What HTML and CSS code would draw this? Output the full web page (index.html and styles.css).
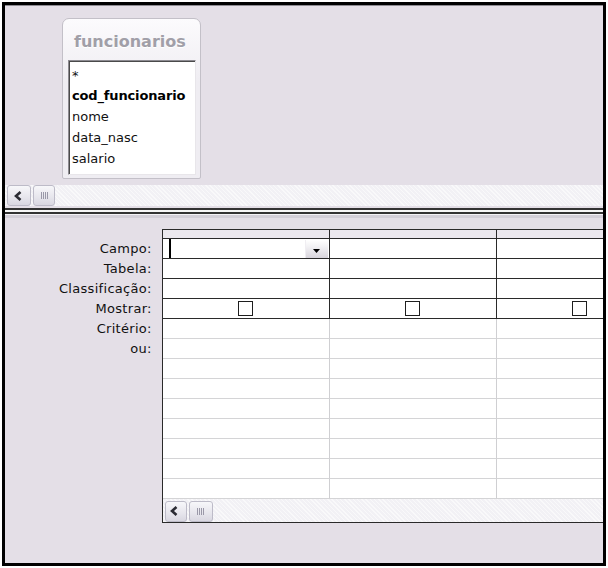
FILE: index.html
```html
<!DOCTYPE html>
<html lang="pt">
<head>
	<meta charset="UTF-8">
	<title>Consulta - funcionarios</title>
	<link rel="stylesheet" href="styles.css">
</head>
<body>
	<div class="frame">
		<!-- painel de tabelas -->
		<div class="design-pane">
			<div class="field-list">
				<div class="field-list-title">funcionarios</div>
				<ul class="fields">
					<li class="all">*</li>
					<li class="key">cod_funcionario</li>
					<li>nome</li>
					<li>data_nasc</li>
					<li>salario</li>
				</ul>
			</div>
		</div>
		<div class="hscroll top-scroll">
			<span class="sb-btn"><svg width="8" height="10" viewBox="0 0 8 10"><polyline points="6.5,1 2,5 6.5,9" fill="none" stroke="#2b2b33" stroke-width="2.6"/></svg></span>
			<span class="sb-thumb"><i></i><i></i><i></i><i></i></span>
		</div>
		<div class="splitter"></div>

		<!-- grade QBE -->
		<div class="qbe-pane">
			<div class="qbe-labels">
				<div class="lbl-head"></div>
				<div>Campo:</div>
				<div>Tabela:</div>
				<div>Classificação:</div>
				<div>Mostrar:</div>
				<div>Critério:</div>
				<div>ou:</div>
			</div>
			<div class="qbe-grid">
				<div class="row head"><div class="cell"></div><div class="cell"></div><div class="cell"></div></div>
				<div class="row">
					<div class="cell combo"><span class="caret"></span><span class="combo-btn"><svg width="7" height="4" viewBox="0 0 7 4"><polygon points="0,0 7,0 3.5,4" fill="#000"/></svg></span></div>
					<div class="cell"></div><div class="cell"></div>
				</div>
				<div class="row"><div class="cell"></div><div class="cell"></div><div class="cell"></div></div>
				<div class="row"><div class="cell"></div><div class="cell"></div><div class="cell"></div></div>
				<div class="row">
					<div class="cell check"><span class="box"></span></div>
					<div class="cell check"><span class="box"></span></div>
					<div class="cell check"><span class="box"></span></div>
				</div>
				<div class="row light"><div class="cell"></div><div class="cell"></div><div class="cell"></div></div>
				<div class="row light"><div class="cell"></div><div class="cell"></div><div class="cell"></div></div>
				<div class="row light"><div class="cell"></div><div class="cell"></div><div class="cell"></div></div>
				<div class="row light"><div class="cell"></div><div class="cell"></div><div class="cell"></div></div>
				<div class="row light"><div class="cell"></div><div class="cell"></div><div class="cell"></div></div>
				<div class="row light"><div class="cell"></div><div class="cell"></div><div class="cell"></div></div>
				<div class="row light"><div class="cell"></div><div class="cell"></div><div class="cell"></div></div>
				<div class="row light"><div class="cell"></div><div class="cell"></div><div class="cell"></div></div>
				<div class="row light"><div class="cell"></div><div class="cell"></div><div class="cell"></div></div>
				<div class="hscroll grid-scroll">
					<span class="sb-btn"><svg width="8" height="10" viewBox="0 0 8 10"><polyline points="6.5,1 2,5 6.5,9" fill="none" stroke="#2b2b33" stroke-width="2.6"/></svg></span>
					<span class="sb-thumb"><i></i><i></i><i></i><i></i></span>
				</div>
			</div>
		</div>
	</div>
</body>
</html>
```

FILE: styles.css
```css
	body {
		margin: 0;
		background: #fff;
		font: 13px/1.2 "DejaVu Sans", Verdana, sans-serif;
		color: #000;
	}

	/**
	 * Janela
	 */
	.frame {
		display: flex;
		flex-direction: column;
		width: 598px;
		height: 558px;
		margin: 2px;
		border: 3px solid #000;
		background: #e4dfe7;
		overflow: hidden;
	}

	/**
	 * Painel superior - lista de campos
	 */
	.design-pane {
		height: 180px;
		padding: 12px 0 0 57px;
		box-sizing: border-box;
		border-top: 1px solid #8e8c92;
	}
	.field-list {
		width: 139px;
		height: 161px;
		box-sizing: border-box;
		padding: 0 4px 3px 5px;
		border: 1px solid #c3c0c8;
		border-radius: 7px 7px 2px 2px;
		background: linear-gradient(#fcfbfd, #efedf2 40%, #efedf2);
	}
	.field-list-title {
		height: 41px;
		box-sizing: border-box;
		padding: 13px 0 0 6px;
		font-weight: bold;
		font-size: 16px;
		line-height: 20px;
		color: #a19fa8;
		text-shadow: 0 1px 0 #fff;
	}
	.fields {
		height: 115px;
		box-sizing: border-box;
		margin: 0;
		padding: 3px 2px 0 3px;
		list-style: none;
		background: #fff;
		border: 1px solid;
		border-color: #8d8b91 #e8e6ea #e8e6ea #8d8b91;
		box-shadow: 1px 1px 0 #4a4a4a inset;
		overflow: hidden;
	}
	.fields li {
		line-height: 21px;
		white-space: nowrap;
		color: #111;
	}
	.fields li.all { line-height: 18px; padding-top: 3px; }
	.fields li.key {
		font-weight: bold;
		letter-spacing: -.15px;
		color: #000;
	}

	/**
	 * Barras de rolagem
	 */
	.hscroll {
		display: flex;
		align-items: center;
		gap: 2px;
		background-color: #f2f1f5;
		background-image: repeating-linear-gradient(45deg, rgba(255,255,255,.55) 0 1px, transparent 1px 3px);
	}
	.top-scroll {
		height: 21px;
		padding-left: 2px;
	}
	.sb-btn, .sb-thumb {
		display: flex;
		align-items: center;
		justify-content: center;
		height: 21px;
		box-sizing: border-box;
		border: 1px solid #bdbbc8;
		border-radius: 3px;
		background: linear-gradient(#f7f7fa, #e6e5ec 60%, #d9d7e1);
	}
	.top-scroll .sb-btn { width: 24px; }
	.sb-btn svg { margin-right: 3px; }
	.sb-thumb {
		width: 22px;
		gap: 1px;
	}
	.sb-thumb i {
		width: 1px;
		height: 7px;
		background: #9a98a8;
	}
	.splitter {
		height: 12px;
		flex: none;
		background: linear-gradient(to bottom,
			#e4dfe7 0 2px, #333 2px 4px, #f6f6f6 4px 6px,
			#333 6px 8px, #f4f2f6 8px 9px, #d3cfd8 9px 12px);
	}

	/**
	 * Grade QBE
	 */
	.qbe-pane {
		display: flex;
		padding-top: 11px;
	}
	.qbe-labels {
		width: 157px;
		box-sizing: border-box;
		padding-right: 10px;
		text-align: right;
		line-height: 20px;
		letter-spacing: .3px;
		color: #111;
	}
	.qbe-labels .lbl-head { height: 10px; }
	.qbe-grid {
		width: 441px;
		overflow: hidden;
		border: 1px solid #2a2a2a;
		border-right: 0;
		background: #fff;
	}
	.row {
		display: flex;
		height: 20px;
	}
	.cell {
		flex: 0 0 167px;
		box-sizing: border-box;
		border-right: 1px solid #2a2a2a;
		border-bottom: 1px solid #2a2a2a;
	}
	.row.head { height: 9px; }
	.row.head .cell { background: #ebe8ee; }
	.row.light .cell {
		border-right-color: #cfcfd2;
		border-bottom-color: #d4d4d6;
	}
	.combo {
		display: flex;
		align-items: flex-start;
	}
	.caret {
		width: 2px;
		height: 19px;
		margin-left: 6px;
		background: #000;
	}
	.combo-btn {
		display: flex;
		justify-content: center;
		width: 23px;
		height: 18px;
		box-sizing: border-box;
		margin: 1px 1px 0 auto;
		padding-top: 9px;
		background: linear-gradient(#fff, #f1f0f3 40%, #d8d5dc);
		border-left: 1px solid #f0eef2;
	}
	.check {
		display: flex;
		align-items: center;
		justify-content: center;
	}
	.check .box {
		width: 15px;
		height: 15px;
		box-sizing: border-box;
		border: 1px solid #1e1e1e;
		background: #fff;
	}
	.grid-scroll {
		height: 23px;
		padding: 1px 0 0 2px;
		box-sizing: border-box;
	}
	.grid-scroll .sb-btn { width: 22px; }
	.grid-scroll .sb-thumb { width: 24px; }
```
